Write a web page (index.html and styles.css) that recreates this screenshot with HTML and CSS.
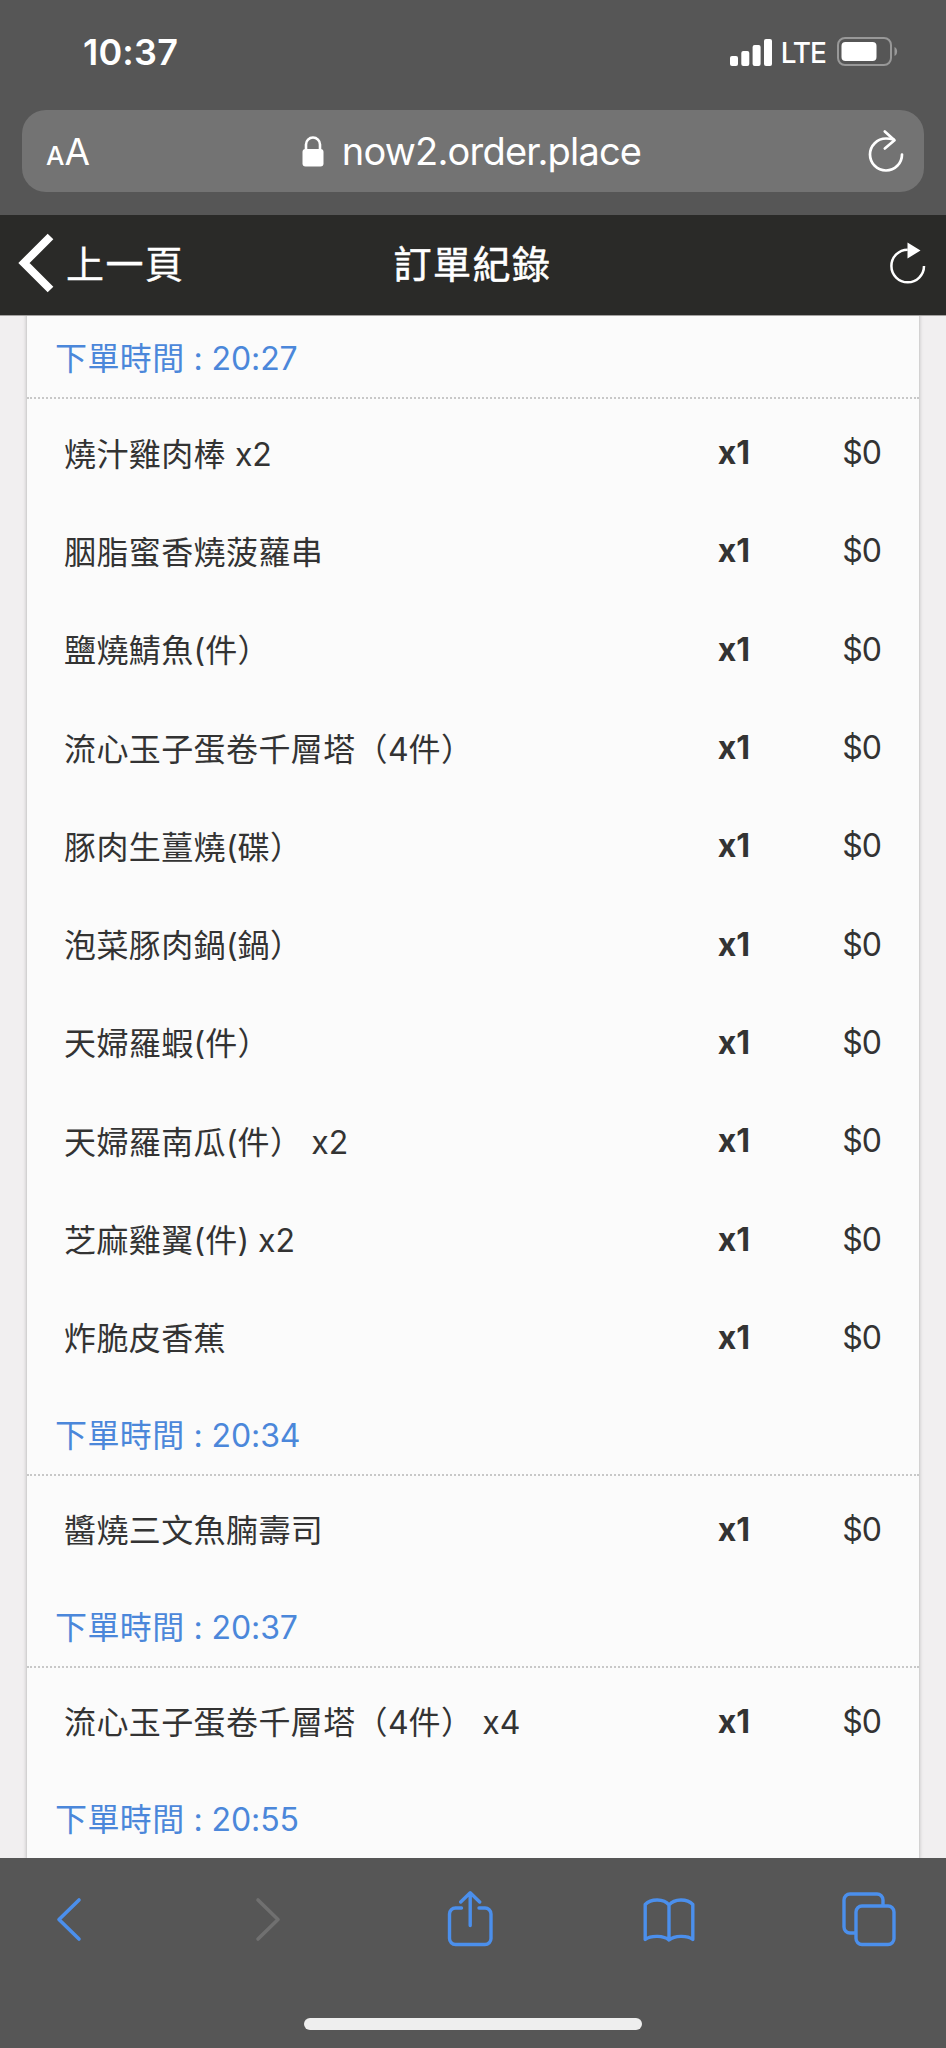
FILE: index.html
```html
<!DOCTYPE html>
<html lang="zh-Hant">
<head>
<meta charset="utf-8">
<title>訂單紀錄</title>
<link rel="stylesheet" href="styles.css">
</head>
<body>
<header class="browser-top">
  <div class="status-bar">
    <span class="clock">10:37</span>
    <div class="status-icons">
      <svg class="signal" width="42" height="27" viewBox="0 0 42 27" fill="#fff"><rect x="0" y="17" width="8" height="10" rx="2"/><rect x="11.3" y="12" width="8" height="15" rx="2"/><rect x="22.6" y="6" width="8" height="21" rx="2"/><rect x="34" y="0" width="8" height="27" rx="2"/></svg>
      <span class="network">LTE</span>
      <svg class="battery" width="62" height="30" viewBox="0 0 62 30"><rect x="1" y="1" width="53" height="27" rx="7" fill="none" stroke="#989898" stroke-width="2"/><rect x="4.500" y="5" width="35" height="19" rx="4" fill="#fff"/><path d="M57.5 10c3.5 1.500 3.500 7.500 0 9z" fill="#989898"/></svg>
    </div>
  </div>
  <div class="address-bar">
    <span class="reader"><span class="reader-small">A</span>A</span>
    <div class="url">
      <svg width="22" height="31" viewBox="0 0 22 31"><rect x="0.500" y="13" width="21" height="17.500" rx="3" fill="#fff"/><path d="M4 15V8.500a7 7 0 0 1 14 0V15" fill="none" stroke="#fff" stroke-width="2.600"/></svg>
      <span class="domain">now2.order.place</span>
    </div>
    <svg class="reload" width="36" height="44" viewBox="0 0 36 44" fill="none" stroke="#fff" stroke-width="2.700" stroke-linecap="round" stroke-linejoin="round"><path d="M34 25.500A16 16 0 1 1 18 9.500c3 0 5 .3 7.500 1"/><path d="M16.800 2.500L26.500 11.300 16.800 19.500"/></svg>
  </div>
</header>
<nav class="nav-bar">
  <a class="back">
    <svg width="36" height="60" viewBox="0 0 36 60" fill="none" stroke="#fff" stroke-width="8"><path d="M32.500 3.500L6 30l26.500 26.500"/></svg>
    <span>上一頁</span>
  </a>
  <h1 class="nav-title">訂單紀錄</h1>
  <svg class="refresh" width="38" height="44" viewBox="0 0 38 44"><path d="M35 25A16.300 16.300 0 1 1 18.700 8.700" fill="none" stroke="#fff" stroke-width="2.500"/><path d="M18.500 1.500v16L31.500 9.500z" fill="#fff"/></svg>
</nav>
<main class="page">
  <section class="card">
    <h2 class="time">下單時間<span class="latin"> : 20:27</span></h2>
    <div class="row"><span class="name">燒汁雞肉棒<span class="latin"> x2</span></span><b class="qty">x1</b><span class="price">$0</span></div>
    <div class="row"><span class="name">胭脂蜜香燒菠蘿串</span><b class="qty">x1</b><span class="price">$0</span></div>
    <div class="row"><span class="name">鹽燒鯖魚<span class="latin">(</span>件）</span><b class="qty">x1</b><span class="price">$0</span></div>
    <div class="row"><span class="name">流心玉子蛋卷千層塔（<span class="latin">4</span>件）</span><b class="qty">x1</b><span class="price">$0</span></div>
    <div class="row"><span class="name">豚肉生薑燒<span class="latin">(</span>碟）</span><b class="qty">x1</b><span class="price">$0</span></div>
    <div class="row"><span class="name">泡菜豚肉鍋<span class="latin">(</span>鍋）</span><b class="qty">x1</b><span class="price">$0</span></div>
    <div class="row"><span class="name">天婦羅蝦<span class="latin">(</span>件）</span><b class="qty">x1</b><span class="price">$0</span></div>
    <div class="row"><span class="name">天婦羅南瓜<span class="latin">(</span>件）<span class="latin"> x2</span></span><b class="qty">x1</b><span class="price">$0</span></div>
    <div class="row"><span class="name">芝麻雞翼<span class="latin">(</span>件<span class="latin">) x2</span></span><b class="qty">x1</b><span class="price">$0</span></div>
    <div class="row"><span class="name">炸脆皮香蕉</span><b class="qty">x1</b><span class="price">$0</span></div>
    <h2 class="time">下單時間<span class="latin"> : 20:34</span></h2>
    <div class="row"><span class="name">醬燒三文魚腩壽司</span><b class="qty">x1</b><span class="price">$0</span></div>
    <h2 class="time">下單時間<span class="latin"> : 20:37</span></h2>
    <div class="row"><span class="name">流心玉子蛋卷千層塔（<span class="latin">4</span>件）<span class="latin"> x4</span></span><b class="qty">x1</b><span class="price">$0</span></div>
    <h2 class="time">下單時間<span class="latin"> : 20:55</span></h2>
  </section>
</main>
<footer class="toolbar">
  <div class="tools">
    <svg width="54" height="56" viewBox="0 0 54 56" fill="none" stroke="#4b8fec" stroke-width="3.600" stroke-linecap="round" stroke-linejoin="round"><path d="M25 9L5 28.500 25 48"/></svg>
    <svg width="54" height="56" viewBox="0 0 54 56" fill="none" stroke="#707070" stroke-width="3.600" stroke-linecap="round" stroke-linejoin="round"><path d="M6 9l20 19.500L6 48"/></svg>
    <svg width="54" height="56" viewBox="0 0 54 56" fill="none" stroke="#4b8fec" stroke-width="3.400" stroke-linecap="round" stroke-linejoin="round"><path d="M14.500 17H8.500a6 6 0 0 0-6 6V47.500a6 6 0 0 0 6 6H38a6 6 0 0 0 6-6V23a6 6 0 0 0-6-6H32"/><path d="M23.200 34.500V2M13.700 11L23.200 1.800 32.700 11"/></svg>
    <svg width="54" height="56" viewBox="0 0 54 56" fill="none" stroke="#4b8fec" stroke-width="3.400" stroke-linejoin="round"><path d="M26 49C21 44.500 8 44 2.200 48.500V13.500C8 7.500 21 7.500 26 14 31.500 7.500 44 7.500 49.800 13.500v35C44 44 31.500 44.500 26 49zM26 14v35"/></svg>
    <svg width="54" height="56" viewBox="0 0 54 56" fill="none" stroke="#4b8fec" stroke-width="3.400"><path d="M13.500 42H8a6 6 0 0 1-6-6V9a6 6 0 0 1 6-6H35a6 6 0 0 1 6 6v5.500"/><rect x="14" y="15" width="38" height="38.500" rx="6"/></svg>
  </div>
  <div class="home-indicator"></div>
</footer>
</body>
</html>
```
FILE: styles.css
```css
* { box-sizing: border-box; }
body {
  margin: 0;
  width: 946px;
  height: 2048px;
  overflow: hidden;
  display: flex;
  flex-direction: column;
  background: #f1eff0;
  color: #333;
  font-family: Inter, "Noto Sans CJK TC", sans-serif;
}
svg { display: block; flex: none; }
h1, h2 { margin: 0; font-weight: 400; }

.browser-top { height: 215px; background: #565656; color: #fff; flex: none; }
.status-bar {
  height: 110px;
  padding: 0 47px 6px 83px;
  display: flex;
  align-items: center;
  justify-content: space-between;
}
.clock { font-size: 36px; font-weight: 600; letter-spacing: 0.2px; }
.status-icons { display: flex; align-items: center; }
.network { margin: 2px 11px 0 9px; font-size: 28px; line-height: 34px; letter-spacing: -1px; font-weight: 500; }
.address-bar {
  height: 82px;
  margin: 0 22px;
  padding: 0 20px 0 24px;
  border-radius: 24px;
  background: #737373;
  display: grid;
  grid-template-columns: 1fr auto 1fr;
  align-items: center;
}
.reader { font-size: 37px; }
.reader-small { font-size: 26px; font-weight: 500; }
.url { display: flex; align-items: center; gap: 18px; margin-right: 7px; }
.domain { font-size: 38px; line-height: 46px; letter-spacing: -0.8px; }
.reload { justify-self: end; }

.nav-bar {
  height: 101px;
  padding: 0 19px 4px 18px;
  flex: none;
  display: grid;
  grid-template-columns: 1fr auto 1fr;
  align-items: center;
  background: #2a2a28;
  color: #fff;
  border-bottom: 1px solid #a3a1a0;
}
.back { display: flex; align-items: center; gap: 12px; font-size: 38px; letter-spacing: 1.5px; -webkit-text-stroke: 0.3px #fff; }
.back span, .nav-title { padding-bottom: 3px; }
.nav-title { font-size: 38px; letter-spacing: 1.5px; -webkit-text-stroke: 0.6px #fff; }
.refresh { justify-self: end; }

.page { flex: 1; min-height: 0; overflow: hidden; padding: 0 27px; }
.card {
  margin-top: -10.700px;
  background: #fbfbfb;
  box-shadow: 0 0 4px rgba(0, 0, 0, 0.3);
}
.time {
  height: 93.700px;
  padding: 30px 0 0 28px;
  border-bottom: 2px dotted #c8c8c8;
  color: #4b87da;
  font-size: 32px;
  line-height: 48px;
  letter-spacing: 0.400px;
}
.row {
  height: 98.300px;
  padding: 10px 38px 0 37px;
  display: grid;
  grid-template-columns: 1fr auto 131px;
  align-items: center;
  font-size: 32px;
  line-height: 48px;
}
.name { padding-top: 3px; letter-spacing: 0.400px; }
.latin { letter-spacing: -0.100px; }
.price { text-align: right; letter-spacing: -1px; }

.toolbar { height: 190px; flex: none; background: #565656; }
.tools { padding: 33px 0 0 54px; display: grid; grid-template-columns: 198px 195px 196px 199px 54px; }
.home-indicator { width: 338px; height: 12px; margin: 71px auto 0; border-radius: 6px; background: #eee; }
```
